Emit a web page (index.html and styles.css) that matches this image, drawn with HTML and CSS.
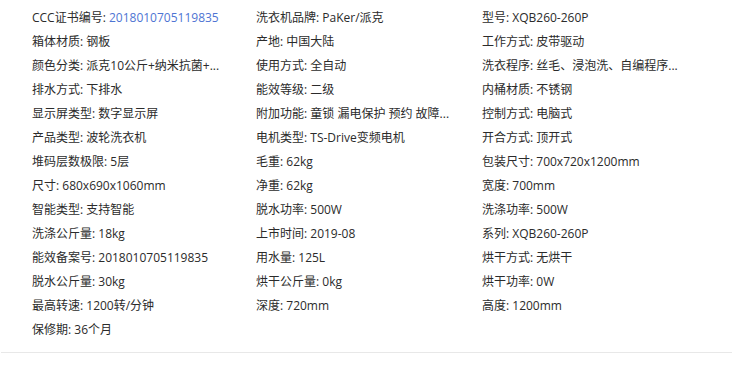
FILE: index.html
```html
<!DOCTYPE html>
<html lang="zh-CN">
<head>
<meta charset="utf-8">
<title>规格参数</title>
<link rel="stylesheet" href="styles.css">
</head>
<body>
<div class="params">
  <ul class="param-list">
    <li>CCC证书编号: <a class="link" href="#">2018010705119835</a></li>
    <li>洗衣机品牌: PaKer/派克</li>
    <li>型号: XQB260-260P</li>
    <li>箱体材质: 钢板</li>
    <li>产地: 中国大陆</li>
    <li>工作方式: 皮带驱动</li>
    <li>颜色分类: 派克10公斤+纳米抗菌+...</li>
    <li>使用方式: 全自动</li>
    <li>洗衣程序: 丝毛、浸泡洗、自编程序...</li>
    <li>排水方式: 下排水</li>
    <li>能效等级: 二级</li>
    <li>内桶材质: 不锈钢</li>
    <li>显示屏类型: 数字显示屏</li>
    <li>附加功能: 童锁 漏电保护 预约 故障...</li>
    <li>控制方式: 电脑式</li>
    <li>产品类型: 波轮洗衣机</li>
    <li>电机类型: TS-Drive变频电机</li>
    <li>开合方式: 顶开式</li>
    <li>堆码层数极限: 5层</li>
    <li>毛重: 62kg</li>
    <li>包装尺寸: 700x720x1200mm</li>
    <li>尺寸: 680x690x1060mm</li>
    <li>净重: 62kg</li>
    <li>宽度: 700mm</li>
    <li>智能类型: 支持智能</li>
    <li>脱水功率: 500W</li>
    <li>洗涤功率: 500W</li>
    <li>洗涤公斤量: 18kg</li>
    <li>上市时间: 2019-08</li>
    <li>系列: XQB260-260P</li>
    <li>能效备案号: 2018010705119835</li>
    <li>用水量: 125L</li>
    <li>烘干方式: 无烘干</li>
    <li>脱水公斤量: 30kg</li>
    <li>烘干公斤量: 0kg</li>
    <li>烘干功率: 0W</li>
    <li>最高转速: 1200转/分钟</li>
    <li>深度: 720mm</li>
    <li>高度: 1200mm</li>
    <li>保修期: 36个月</li>
  </ul>
</div>
</body>
</html>
```
FILE: styles.css
```css
html, body {
  margin: 0;
  padding: 0;
  background: #fff;
}
body {
  font-family: "Open Sans", "Noto Sans CJK SC", sans-serif;
  font-size: 12px;
  color: #2b2b2b;
}
.params {
  margin-left: 1px;
  padding: 6px 0 10px;
  border-bottom: 1px solid #e8e8e8;
}
.param-list {
  list-style: none;
  margin: 0;
  padding: 0 0 0 31px;
  display: grid;
  grid-template-columns: 224px 226px 226px;
}
.param-list li {
  height: 24px;
  line-height: 24px;
  white-space: nowrap;
  overflow: hidden;
}
.link {
  color: #4e74d3;
  text-decoration: none;
}
```
